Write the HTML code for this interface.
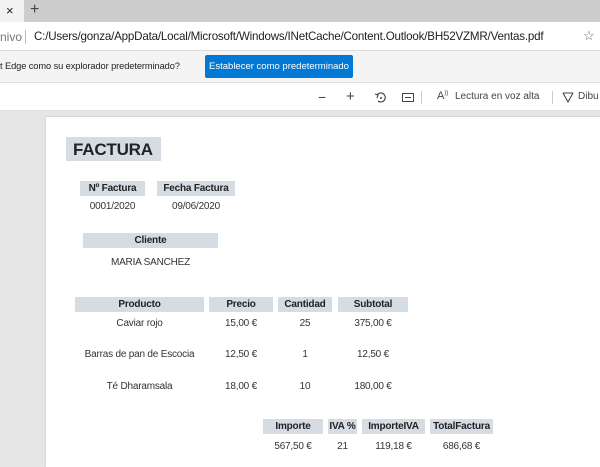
<!DOCTYPE html><html><head><meta charset="utf-8"><style>
body{margin:0;width:600px;height:463px;overflow:hidden;position:relative;font-family:"Liberation Sans",sans-serif;background:#e6e6e6}
.a{position:absolute}
.h{position:absolute;background:#d6dce4;font-weight:bold;font-size:10px;color:#222;text-align:center;line-height:15px;height:15px;letter-spacing:-0.2px}
.v{position:absolute;font-size:10px;color:#333;text-align:center;letter-spacing:-0.2px}
</style></head><body>
<div class="a" style="left:0;top:0;width:600px;height:22px;background:#cdcdcd"></div>
<div class="a" style="left:0;top:0;width:24px;height:22px;background:#f2f2f2"></div>
<div class="a" style="left:6px;top:3px;font-size:13px;color:#222">×</div>
<div class="a" style="left:30px;top:1px;font-size:16px;color:#444">+</div>
<div class="a" style="left:0;top:22px;width:600px;height:28px;background:#fff;border-bottom:1px solid #ddd"></div>
<div class="a" style="left:0;top:30px;font-size:12px;color:#777">nivo</div>
<div class="a" style="left:25px;top:30px;width:1px;height:14px;background:#bbb"></div>
<div class="a" style="left:34px;top:30px;font-size:11.6px;color:#222;letter-spacing:-0.2px">C:/Users/gonza/AppData/Local/Microsoft/Windows/INetCache/Content.Outlook/BH52VZMR/Ventas.pdf</div>
<div class="a" style="left:583px;top:28px;font-size:13px;color:#666">☆</div>
<div class="a" style="left:0;top:51px;width:600px;height:31px;background:#f4f4f4;border-bottom:1px solid #ddd"></div>
<div class="a" style="left:0;top:61px;font-size:9.3px;color:#222;letter-spacing:-0.1px">t Edge como su explorador predeterminado?</div>
<div class="a" style="left:205px;top:55px;width:148px;height:23px;background:#0078d4;color:#fff;font-size:9.5px;line-height:23px;text-align:center;border-radius:2px">Establecer como predeterminado</div>
<div class="a" style="left:0;top:83px;width:600px;height:27px;background:#fff;border-bottom:1px solid #ddd"></div>
<div class="a" style="left:318px;top:89px;font-size:14px;color:#444">−</div>
<div class="a" style="left:346px;top:88px;font-size:15px;color:#444">+</div>
<svg class="a" style="left:374px;top:91px" width="13" height="13"><path d="M3 4 A4.5 4.5 0 1 1 4 10" fill="none" stroke="#444" stroke-width="1.2"/><path d="M1 3 L4 4 L3 7" fill="none" stroke="#444" stroke-width="1.1"/><circle cx="7" cy="7" r="1" fill="#444"/></svg>
<svg class="a" style="left:402px;top:92px" width="12" height="11"><rect x="0.5" y="1.5" width="11" height="8" fill="none" stroke="#444"/><path d="M3 5.5h6" stroke="#444"/></svg>
<div class="a" style="left:421px;top:91px;width:1px;height:13px;background:#ccc"></div>
<div class="a" style="left:437px;top:90px;font-size:11px;color:#444">A<sup style="font-size:6px">))</sup></div>
<div class="a" style="left:455px;top:91px;font-size:10px;color:#444">Lectura en voz alta</div>
<div class="a" style="left:552px;top:91px;width:1px;height:13px;background:#ccc"></div>
<svg class="a" style="left:562px;top:91px" width="12" height="13"><path d="M1 2 L6 11 L11 2 M1 2 H11" fill="none" stroke="#444" stroke-width="1.1"/></svg>
<div class="a" style="left:578px;top:91px;font-size:10px;color:#444">Dibu</div>
<div class="a" style="left:46px;top:117px;width:560px;height:350px;background:#fff;box-shadow:0 0 2px #bbb"></div>
<div class="h" style="left:66px;top:137px;width:95px;height:24px;line-height:26px;font-size:17px;text-align:left"><span style="margin-left:7px">FACTURA</span></div>
<div class="h" style="left:80px;top:181px;width:65px">Nº Factura</div>
<div class="h" style="left:157px;top:181px;width:78px">Fecha Factura</div>
<div class="v" style="left:80px;top:201px;width:65px">0001/2020</div>
<div class="v" style="left:157px;top:201px;width:78px">09/06/2020</div>
<div class="h" style="left:83px;top:233px;width:135px">Cliente</div>
<div class="v" style="left:83px;top:257px;width:135px">MARIA SANCHEZ</div>
<div class="h" style="left:75px;top:297px;width:129px">Producto</div>
<div class="h" style="left:209px;top:297px;width:64px">Precio</div>
<div class="h" style="left:278px;top:297px;width:54px">Cantidad</div>
<div class="h" style="left:338px;top:297px;width:70px">Subtotal</div>
<div class="v" style="left:75px;top:318px;width:129px">Caviar rojo</div>
<div class="v" style="left:209px;top:318px;width:64px">15,00 €</div>
<div class="v" style="left:278px;top:318px;width:54px">25</div>
<div class="v" style="left:338px;top:318px;width:70px">375,00 €</div>
<div class="v" style="left:70px;top:349px;width:139px">Barras de pan de Escocia</div>
<div class="v" style="left:209px;top:349px;width:64px">12,50 €</div>
<div class="v" style="left:278px;top:349px;width:54px">1</div>
<div class="v" style="left:338px;top:349px;width:70px">12,50 €</div>
<div class="v" style="left:75px;top:381px;width:129px">Té Dharamsala</div>
<div class="v" style="left:209px;top:381px;width:64px">18,00 €</div>
<div class="v" style="left:278px;top:381px;width:54px">10</div>
<div class="v" style="left:338px;top:381px;width:70px">180,00 €</div>
<div class="h" style="left:263px;top:419px;width:60px">Importe</div>
<div class="h" style="left:328px;top:419px;width:29px">IVA %</div>
<div class="h" style="left:362px;top:419px;width:63px">ImporteIVA</div>
<div class="h" style="left:430px;top:419px;width:63px">TotalFactura</div>
<div class="v" style="left:263px;top:441px;width:60px">567,50 €</div>
<div class="v" style="left:328px;top:441px;width:29px">21</div>
<div class="v" style="left:362px;top:441px;width:63px">119,18 €</div>
<div class="v" style="left:430px;top:441px;width:63px">686,68 €</div>
</body></html>
